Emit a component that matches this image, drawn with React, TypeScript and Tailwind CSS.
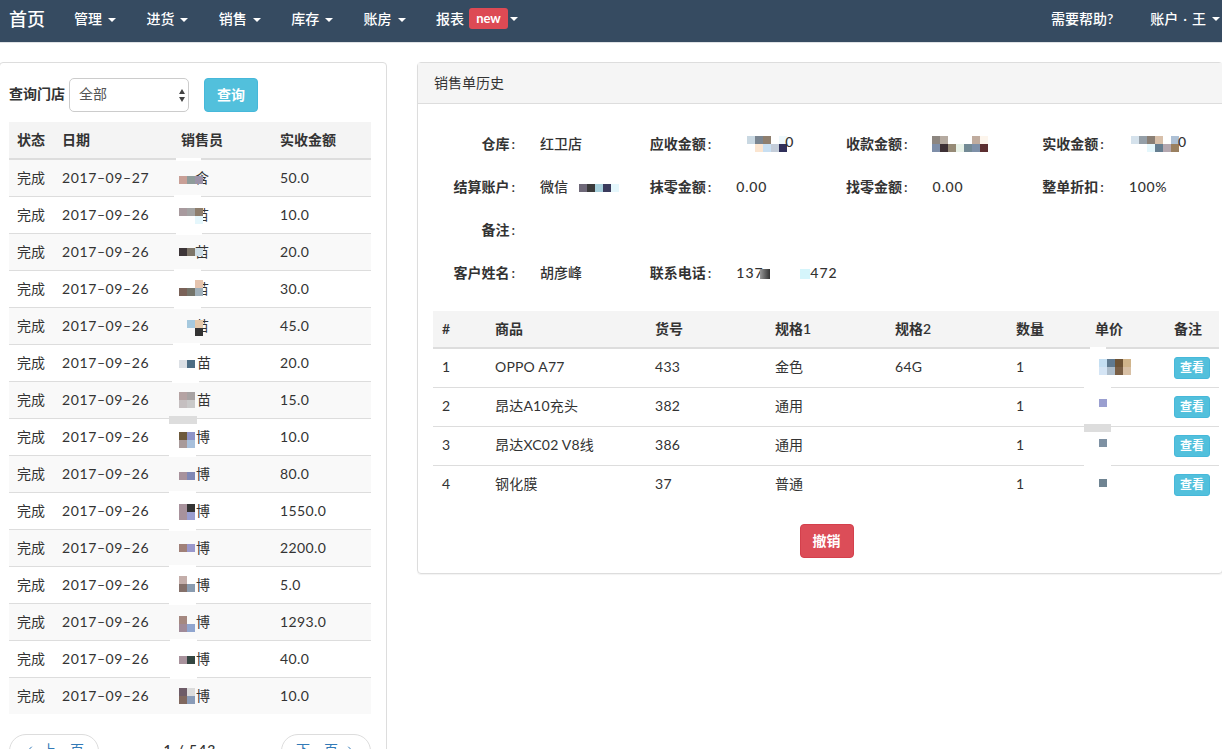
import { ChevronLeft, ChevronRight } from "lucide-react";

type Tile = [number, number, string]; // col, row, colour
type Mosaic = { x: number; y: number; tiles: Tile[] };

const font = "font-['Lato','Noto_Sans_CJK_SC',sans-serif]";

const orders: { date: string; name: string; amount: string; nameX: number; gapX: number; gapW: number; y: number; tiles: Tile[] }[] = [
  { date: "2017–09–27", name: "含", amount: "50.0", nameX: 195, gapX: 176, gapW: 25, y: 16, tiles: [[0, 0, "#c9a097"], [1, 0, "#8f9c9b"], [2, 0, "#9c93a8"]] },
  { date: "2017–09–26", name: "苗", amount: "10.0", nameX: 195, gapX: 174, gapW: 27, y: 11, tiles: [[0, 0, "#a89a9e"], [1, 0, "#a3a3a3"], [2, 0, "#8d7d6c"], [2, 1, "#e5f7fc"]] },
  { date: "2017–09–26", name: "苗", amount: "20.0", nameX: 195, gapX: 176, gapW: 26, y: 14, tiles: [[0, 0, "#3d3538"], [1, 0, "#7d7568"], [2, 0, "#cddde6"]] },
  { date: "2017–09–26", name: "苗", amount: "30.0", nameX: 195, gapX: 174, gapW: 27, y: 9, tiles: [[2, 0, "#e5c4ae"], [0, 1, "#7a6258"], [1, 1, "#74746a"], [2, 1, "#a0b0ba"]] },
  { date: "2017–09–26", name: "苗", amount: "45.0", nameX: 195, gapX: 174, gapW: 27, y: 12, tiles: [[1, 0, "#a6c9de"], [2, 0, "#e5c9ab"], [2, 1, "#333333"]] },
  { date: "2017–09–26", name: "苗", amount: "20.0", nameX: 197, gapX: 173, gapW: 27, y: 15, tiles: [[0, 0, "#dce0e5"], [1, 0, "#4d6e85"]] },
  { date: "2017–09–26", name: "苗", amount: "15.0", nameX: 197, gapX: 172, gapW: 27, y: 10, tiles: [[0, 0, "#b5a3a3"], [1, 0, "#a8a3a3"], [0, 1, "#c5bfc0"], [1, 1, "#c9c9c9"]] },
  { date: "2017–09–26", name: "博", amount: "10.0", nameX: 196, gapX: 169, gapW: 28, y: 13, tiles: [[0, 0, "#6e5a3c"], [1, 0, "#8f94c8"], [0, 1, "#a89a9a"], [1, 1, "#a8c0dc"]] },
  { date: "2017–09–26", name: "博", amount: "80.0", nameX: 196, gapX: 169, gapW: 27, y: 16, tiles: [[0, 0, "#a8929c"], [1, 0, "#8088b5"]] },
  { date: "2017–09–26", name: "博", amount: "1550.0", nameX: 196, gapX: 169, gapW: 27, y: 11, tiles: [[0, 0, "#a8929c"], [1, 0, "#333333"], [0, 1, "#a8929c"], [1, 1, "#9a9ed0"]] },
  { date: "2017–09–26", name: "博", amount: "2200.0", nameX: 196, gapX: 169, gapW: 27, y: 14, tiles: [[0, 0, "#a08078"], [1, 0, "#9a98cc"]] },
  { date: "2017–09–26", name: "博", amount: "5.0", nameX: 196, gapX: 169, gapW: 27, y: 9, tiles: [[0, 0, "#c4aeaa"], [0, 1, "#84706a"], [1, 1, "#8a9cb0"]] },
  { date: "2017–09–26", name: "博", amount: "1293.0", nameX: 196, gapX: 169, gapW: 27, y: 12, tiles: [[0, 0, "#a58880"], [0, 1, "#a08a98"], [1, 1, "#90a5cf"]] },
  { date: "2017–09–26", name: "博", amount: "40.0", nameX: 196, gapX: 170, gapW: 27, y: 15, tiles: [[0, 0, "#a8929c"], [1, 0, "#334540"]] },
  { date: "2017–09–26", name: "博", amount: "10.0", nameX: 196, gapX: 170, gapW: 27, y: 10, tiles: [[0, 0, "#6e5c68"], [1, 0, "#dcdcdc"], [0, 1, "#80685f"], [1, 1, "#8a9cb8"]] },
];

const items: { id: number; name: string; code: string; spec1: string; spec2: string; y: number; tiles: Tile[] }[] = [
  { id: 1, name: "OPPO A77", code: "433", spec1: "金色", spec2: "64G", y: 10, tiles: [[0, 0, "#c5dff2"], [1, 0, "#607a90"], [2, 0, "#6e5334"], [3, 0, "#d0b48a"], [0, 1, "#d5e5f5"], [1, 1, "#adbdcb"], [2, 1, "#7a5f45"], [3, 1, "#d8c0a5"]] },
  { id: 2, name: "昂达A10充头", code: "382", spec1: "通用", spec2: "", y: 11, tiles: [[0, 0, "#9a9fd0"]] },
  { id: 3, name: "昂达XC02 V8线", code: "386", spec1: "通用", spec2: "", y: 12, tiles: [[0, 0, "#7e91a3"]] },
  { id: 4, name: "钢化膜", code: "37", spec1: "普通", spec2: "", y: 13, tiles: [[0, 0, "#6f8492"]] },
];

const navItems = ["管理", "进货", "销售", "库存", "账房"];

function Caret() {
  return <span className="ml-[6px] inline-block h-0 w-0 border-x-[4px] border-t-[4px] border-x-transparent border-t-white align-middle" />;
}

// pixelated patch laid over the text it hides
function Pixels({ x, y, tiles }: Mosaic) {
  return (
    <>
      {tiles.map(([col, row, color]) => (
        <span
          key={`${col}-${row}`}
          className="absolute h-2 w-2"
          style={{ left: x + col * 8, top: y + row * 8, backgroundColor: color }}
        />
      ))}
    </>
  );
}

function Info({ label, children }: { label: string; children?: React.ReactNode }) {
  return (
    <div className="flex h-[43px] items-center">
      <span className="w-[86px] shrink-0 text-right font-semibold">
        {label}
        <span className="ml-[2px]">:</span>
      </span>
      <span className="relative ml-[25px] font-medium">{children}</span>
    </div>
  );
}

export default function App() {
  return (
    <div className={`h-[749px] w-[1222px] overflow-hidden bg-white text-sm text-[#333] ${font}`}>
      {/* Navbar */}
      <nav className="flex h-[43px] items-center justify-between border-b border-[#dfe2e5] bg-[#364b61] pb-[5px] text-white">
        <div className="flex items-center">
          <span className="ml-[9px] w-[65px] text-lg font-medium">首页</span>
          {navItems.map((item) => (
            <span key={item} className="w-[72.4px] font-medium">
              {item}
              <Caret />
            </span>
          ))}
          <span className="flex items-center font-medium">
            报表
            <span className="ml-[5px] mr-[-4px] flex h-[21px] w-[39px] items-center justify-center rounded-[3px] bg-[#dd4a54] text-[13px] font-bold">new</span>
            <Caret />
          </span>
        </div>
        <div className="flex items-center font-medium">
          <span className="mr-[37px]">需要帮助?</span>
          <span className="mr-[2px] flex items-center">
            账户
            <span className="mx-[5px]">·</span>
            王
            <Caret />
          </span>
        </div>
      </nav>

      <div className="mt-[19px] flex items-start gap-[30px]">
        {/* Order list */}
        <aside className="-ml-px h-[700px] w-[388px] shrink-0 rounded border border-[#ddd] pl-[9px] pr-[15px]">
          <div className="flex h-[59px] items-end pb-[10px]">
            <span className="mb-[8px] mr-[4px] font-semibold">查询门店</span>
            <div className="relative flex h-[34px] w-[120px] items-center rounded-[5px] border border-[#ccc] pb-[3px] pl-[9px] text-[#555]">
              全部
              <span className="absolute right-[3px] top-[10px] h-0 w-0 border-x-[3px] border-b-[5px] border-x-transparent border-b-[#444]" />
              <span className="absolute bottom-[9px] right-[3px] h-0 w-0 border-x-[3px] border-t-[5px] border-x-transparent border-t-[#444]" />
            </div>
            <button className="ml-[15px] h-[34px] w-[54px] rounded-[4px] border border-[#46b8da] bg-[#52c0dc] pb-px font-semibold text-white">查询</button>
          </div>
          <table className="w-[362px] table-fixed border-collapse">
            <thead>
              <tr className="h-[37px] border-b-2 border-[#ddd] bg-[#f4f4f4] text-left font-semibold">
                <th className="w-[45px] pl-2 font-semibold">状态</th>
                <th className="w-[119px] pl-2 font-semibold">日期</th>
                <th className="w-[99px] pl-2 font-semibold">销售员</th>
                <th className="pl-2 font-semibold">实收金额</th>
              </tr>
            </thead>
            <tbody>
              {orders.map((o, i) => (
                <tr key={i} className={`h-[37px] border-b border-[#ddd] last:border-b-0 ${i % 2 === 0 ? "bg-[#f9f9f9]" : "bg-white"}`}>
                  <td className="pl-2">完成</td>
                  <td className="pl-2 tracking-[0.6px]">{o.date}</td>
                  <td className="relative pl-2">
                    {/* smudge left behind by the redaction, it eats the row line */}
                    <span
                      className={i === 7 ? "absolute top-[-3px] h-2 bg-[#ddd]" : "absolute top-[-2px] h-[3px] bg-white"}
                      style={{ left: o.gapX - 173, width: o.gapW }}
                    />
                    <span className="relative" style={{ left: o.nameX - 181 }}>{o.name}</span>
                    <Pixels x={6} y={o.y} tiles={o.tiles} />
                  </td>
                  <td className="pl-2 tracking-[0.4px]">{o.amount}</td>
                </tr>
              ))}
            </tbody>
          </table>
          <div className="mt-5 flex items-center justify-between">
            <button className="flex h-[34px] w-[90px] items-center justify-center gap-[6px] rounded-full border border-[#ddd] pb-[3px] text-[#337ab7]">
              <ChevronLeft size={12} />
              上一页
            </button>
            <span className="pb-[3px] font-semibold tracking-[1px]">1 / 543</span>
            <button className="flex h-[34px] w-[90px] items-center justify-center gap-[6px] rounded-full border border-[#ddd] pb-[3px] text-[#337ab7]">
              下一页
              <ChevronRight size={12} />
            </button>
          </div>
        </aside>

        {/* Order detail */}
        <section className="-mr-px h-[512px] flex-1 rounded border border-[#ddd] shadow-[0_1px_1px_rgba(0,0,0,0.05)]">
          <header className="flex h-[41px] items-center border-b border-[#ddd] bg-[#f5f5f5] pb-px pl-4">销售单历史</header>
          <div className="grid grid-cols-[196.3px_196.3px_196.3px_1fr] pl-[11px] pt-[18px]">
            <Info label="仓库">红卫店</Info>
            <Info label="应收金额">
              <span className="relative inline-block h-4 w-[58px]">
                <Pixels x={11} y={3} tiles={[[0, 0, "#c9d8e2"], [1, 0, "#7a8590"], [2, 0, "#8f7f6e"], [4, 0, "#eef8fc"], [1, 1, "#fbe5d0"], [2, 1, "#c8dff2"], [3, 1, "#c4cdd9"], [4, 1, "#30305a"]]} />
                <span className="absolute left-[49px] top-[-1px]">0</span>
              </span>
            </Info>
            <Info label="收款金额">
              <span className="relative inline-block h-4 w-[56px]">
                <Pixels x={-1} y={3} tiles={[[0, 0, "#8d8680"], [1, 0, "#b5aaa0"], [5, 0, "#c0ac9e"], [6, 0, "#fdf5ec"], [0, 1, "#7e8ea8"], [1, 1, "#3d3035"], [2, 1, "#968a76"], [3, 1, "#e8f2e8"], [4, 1, "#738a95"], [5, 1, "#7e90a8"], [6, 1, "#5c2e30"]]} />
              </span>
            </Info>
            <Info label="实收金额">
              <span className="relative inline-block h-4 w-[58px]">
                <Pixels x={2} y={3} tiles={[[0, 0, "#d5e2ec"], [1, 0, "#959fa8"], [2, 0, "#8a7f75"], [3, 0, "#d8c0aa"], [5, 0, "#adc0d5"], [2, 1, "#e5f7fc"], [3, 1, "#667e90"], [4, 1, "#b5a8b0"], [5, 1, "#9a8060"]]} />
                <span className="absolute left-[49px] top-[-1px]">0</span>
              </span>
            </Info>

            <Info label="结算账户">
              微信
              <span className="relative ml-[11px] inline-block h-2 w-10">
                <Pixels x={0} y={0} tiles={[[0, 0, "#6e6878"], [1, 0, "#3a3a3a"], [2, 0, "#a8d0dc"], [3, 0, "#3a3a5c"], [4, 0, "#e5f7fc"]]} />
              </span>
            </Info>
            <Info label="抹零金额"><span className="tracking-[0.8px]">0.00</span></Info>
            <Info label="找零金额"><span className="tracking-[0.8px]">0.00</span></Info>
            <Info label="整单折扣"><span className="tracking-[0.7px]">100%</span></Info>

            <Info label="备注" />
            <div />
            <div />
            <div />

            <Info label="客户姓名">胡彦峰</Info>
            <Info label="联系电话">
              <span className="relative inline-block w-[101px] tracking-[1px]">
                137
                <span className="absolute left-[74px] top-0">472</span>
                <span className="absolute left-[24px] top-[6px] h-[10px] w-[10px] bg-gradient-to-r from-[#999] to-[#333]" />
                <span className="absolute left-[64px] top-[6px] h-[10px] w-[10px] bg-[#d5f5fb]" />
              </span>
            </Info>
          </div>

          <table className="ml-[15px] mt-[17px] w-[786px] table-fixed border-collapse">
            <thead>
              <tr className="h-[37px] border-b-2 border-[#ddd] bg-[#f4f4f4] text-left">
                <th className="w-[53px] pb-px pl-[9px] font-semibold">#</th>
                <th className="w-[160px] pb-px pl-[9px] font-semibold">商品</th>
                <th className="w-[120px] pb-px pl-[9px] font-semibold">货号</th>
                <th className="w-[120px] pb-px pl-[9px] font-semibold">规格1</th>
                <th className="w-[121px] pb-px pl-[9px] font-semibold">规格2</th>
                <th className="w-[79px] pb-px pl-[9px] font-semibold">数量</th>
                <th className="w-[79px] pb-px pl-[9px] font-semibold">单价</th>
                <th className="pb-px pl-[9px] font-semibold">备注</th>
              </tr>
            </thead>
            <tbody>
              {items.map((item, i) => (
                <tr key={item.id} className="h-[39px] border-b border-[#ddd] last:border-b-0">
                  <td className="pb-[2px] pl-[9px]">{item.id}</td>
                  <td className="pb-[2px] pl-[9px] tracking-[0.2px]">{item.name}</td>
                  <td className="pb-[2px] pl-[9px] tracking-[0.3px]">{item.code}</td>
                  <td className="pb-[2px] pl-[9px]">{item.spec1}</td>
                  <td className="pb-[2px] pl-[9px] tracking-[0.3px]">{item.spec2}</td>
                  <td className="pb-[2px] pl-[9px]">1</td>
                  <td className="relative">
                    <span
                      className={
                        i === 2
                          ? "absolute left-[-2px] top-[-3px] h-2 w-[27px] bg-[#ddd]"
                          : i === 0
                            ? "absolute left-[4px] top-[-2px] h-[3px] w-4 bg-white"
                            : "absolute left-[-2px] top-[-2px] h-[3px] w-[27px] bg-white"
                      }
                    />
                    <Pixels x={13} y={item.y} tiles={item.tiles} />
                  </td>
                  <td className="pl-[9px]">
                    <button className="flex h-[22px] w-9 items-center justify-center rounded-[3px] border border-[#46b8da] bg-[#52c0dc] text-xs font-semibold text-white">查看</button>
                  </td>
                </tr>
              ))}
            </tbody>
          </table>

          <div className="mt-[20px] flex justify-center pl-[13px]">
            <button className="h-[34px] w-[54px] rounded-[4px] border border-[#d4404c] bg-[#dc4d58] font-semibold text-white">撤销</button>
          </div>
        </section>
      </div>
    </div>
  );
}
